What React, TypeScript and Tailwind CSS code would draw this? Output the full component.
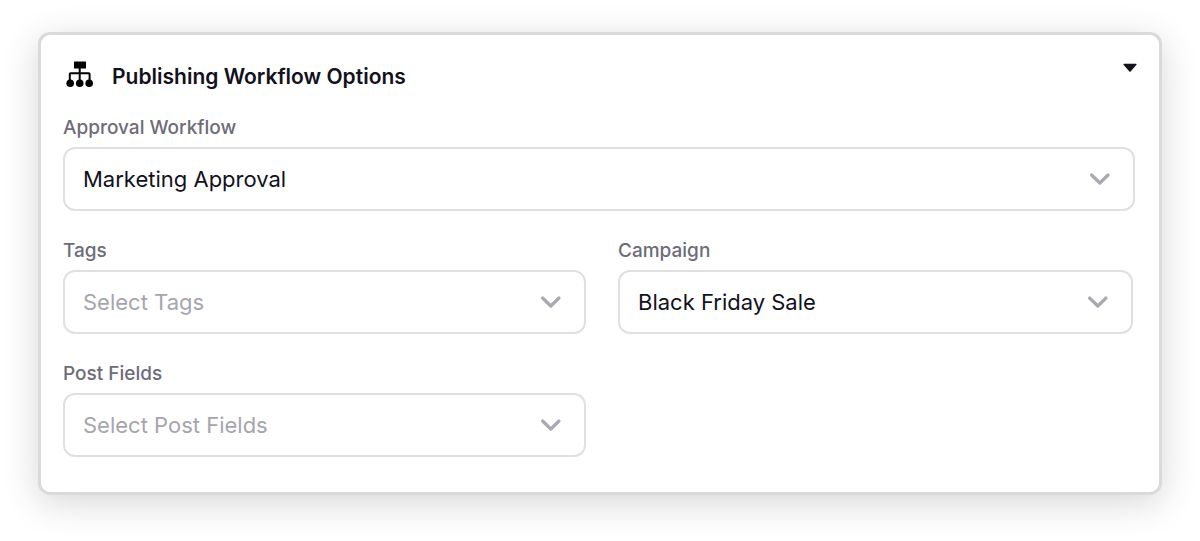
import { useState } from "react";

type FieldProps = {
  id: string;
  label: string;
  options: string[];
  placeholder?: string;
  initial?: string;
};

function SelectField({ id, label, options, placeholder, initial = "" }: FieldProps) {
  const [value, setValue] = useState(initial);
  return (
    <div className="min-w-0">
      <label htmlFor={id} className="block h-7 text-[19px] leading-[18px] font-medium text-[#6d6c78]">
        {label}
      </label>
      <div className="grid items-center">
        <select
          id={id}
          value={value}
          onChange={(e) => setValue(e.target.value)}
          className={
            value
              ? "col-start-1 row-start-1 h-16 w-full appearance-none rounded-xl border-2 border-[#e0e0e0] bg-white pr-14 pl-[18px] text-[22px] text-[#12111c]"
              : "col-start-1 row-start-1 h-16 w-full appearance-none rounded-xl border-2 border-[#e0e0e0] bg-white pr-14 pl-[18px] text-[22px] text-[#a6a5ae]"
          }
        >
          {placeholder && <option value="">{placeholder}</option>}
          {options.map((o) => (
            <option key={o}>{o}</option>
          ))}
        </select>
        <svg
          viewBox="0 0 22 14"
          aria-hidden="true"
          className="pointer-events-none col-start-1 row-start-1 mr-6 h-[14px] w-[22px] justify-self-end"
        >
          <path d="M2.6 3 10.8 11 19 3" fill="none" stroke="#a9a8b3" strokeWidth="3.2" strokeLinecap="round" strokeLinejoin="round" />
        </svg>
      </div>
    </div>
  );
}

function WorkflowIcon() {
  return (
    <svg viewBox="0 0 28 28" aria-hidden="true" className="size-7">
      <rect x="8" y="0.6" width="12" height="7" rx="0.6" />
      <path d="M13.7 7v15M3.8 21v-8a.8.8 0 0 1 .8-.8h18.2a.8.8 0 0 1 .8.8v8" fill="none" stroke="#000" strokeWidth="2" />
      <circle cx="4.2" cy="22.2" r="3.8" />
      <circle cx="13.7" cy="22.2" r="3.8" />
      <circle cx="23.2" cy="22.2" r="3.8" />
    </svg>
  );
}

export default function App() {
  const [open, setOpen] = useState(true);
  return (
    <main className="bg-white px-[38px] pt-8 pb-[46px] font-['Inter',sans-serif]">
      <section className="rounded-xl border-3 border-[#dadada] bg-white pt-6 pr-6 pb-[35px] pl-[22px] shadow-[0_8px_36px_rgba(0,0,0,0.16)]">
        <header className="flex h-[60px] items-start justify-between">
          <div className="flex items-start gap-[18px] pt-0.5 pl-[3px]">
            <WorkflowIcon />
            <h2 className="text-[21px] leading-8 font-semibold text-[#12111c]">Publishing Workflow Options</h2>
          </div>
          <button
            type="button"
            aria-label="Toggle publishing workflow options"
            aria-expanded={open}
            onClick={() => setOpen(!open)}
            className="-mr-0.5 py-1"
          >
            <svg viewBox="0 0 14 10" aria-hidden="true" className="h-[10px] w-[14px]">
              <path d="M1 .8h12a.6.6 0 0 1 .5 1L7.6 8.6a.8.8 0 0 1-1.2 0L.5 1.8a.6.6 0 0 1 .5-1Z" fill="#12111c" />
            </svg>
          </button>
        </header>
        {open && (
          <div className="flex flex-col gap-[31px]">
            <SelectField id="approval" label="Approval Workflow" options={["Marketing Approval"]} initial="Marketing Approval" />
            <div className="grid grid-cols-[523fr_515fr] gap-x-8 gap-y-[31px] pr-0.5">
              <SelectField id="tags" label="Tags" options={[]} placeholder="Select Tags" />
              <SelectField id="campaign" label="Campaign" options={["Black Friday Sale"]} initial="Black Friday Sale" />
              <SelectField id="post-fields" label="Post Fields" options={[]} placeholder="Select Post Fields" />
            </div>
          </div>
        )}
      </section>
    </main>
  );
}
